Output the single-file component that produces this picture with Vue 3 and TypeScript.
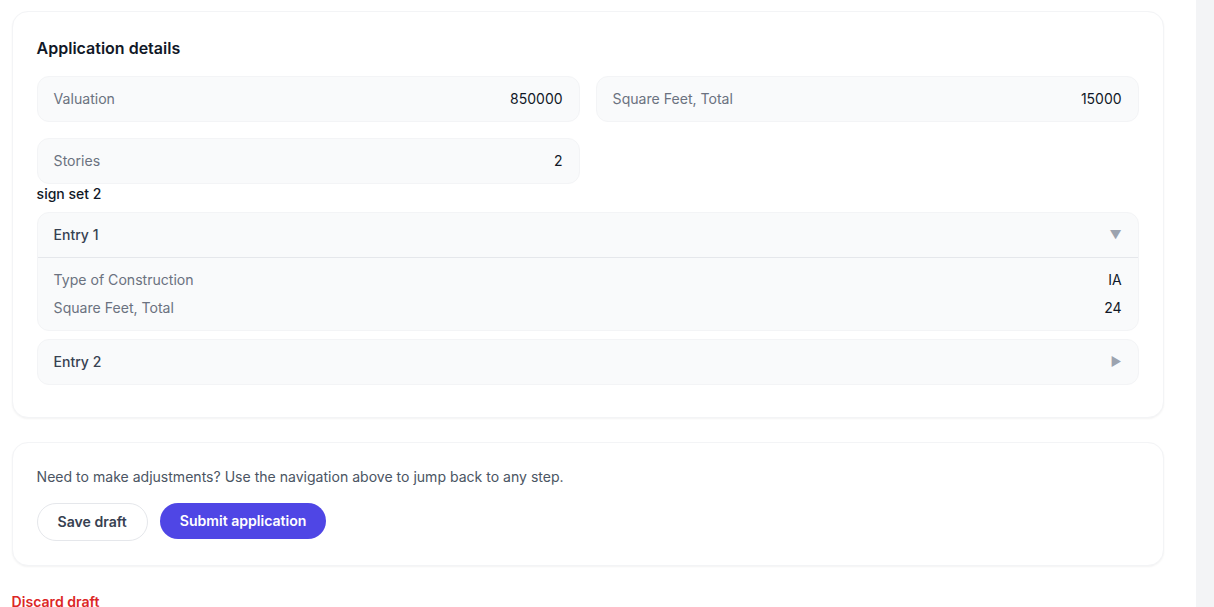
<script setup lang="ts">
const fields = [
  { label: 'Valuation', value: '850000' },
  { label: 'Square Feet, Total', value: '15000' },
  { label: 'Stories', value: '2' },
]
const rows = [
  { label: 'Type of Construction', value: 'IA' },
  { label: 'Square Feet, Total', value: '24' },
]
</script>

<template>
  <div class="page">
    <main class="main">
      <section class="card details">
        <h2 class="title">Application details</h2>
        <div class="grid">
          <div v-for="f in fields" :key="f.label" class="field">
            <span class="label">{{ f.label }}</span>
            <span class="value">{{ f.value }}</span>
          </div>
        </div>
        <div class="set-name">sign set 2</div>
        <div class="entries">
          <div class="entry">
            <div class="entry-head open">
              <span class="entry-name">Entry 1</span>
              <span class="caret">▼</span>
            </div>
            <div class="entry-body">
              <div v-for="r in rows" :key="r.label" class="row">
                <span class="label">{{ r.label }}</span>
                <span class="value">{{ r.value }}</span>
              </div>
            </div>
          </div>
          <div class="entry">
            <div class="entry-head">
              <span class="entry-name">Entry 2</span>
              <span class="caret">▶</span>
            </div>
          </div>
        </div>
      </section>

      <section class="card actions">
        <p class="hint">Need to make adjustments? Use the navigation above to jump back to any step.</p>
        <div class="buttons">
          <button class="btn secondary">Save draft</button>
          <button class="btn primary">Submit application</button>
        </div>
      </section>

      <button class="discard">Discard draft</button>
    </main>
    <aside class="rail"></aside>
  </div>
</template>

<style>
html, body { margin: 0; overflow: hidden; background: #fff; }
</style>

<style scoped>
.page {
  display: flex;
  width: 1214px;
  height: 607px;
  overflow: hidden;
  font-family: Inter, "Liberation Sans", sans-serif;
  font-size: 14px;
  line-height: 20px;
  color: #111827;
}
.main {
  width: 1196px;
  box-sizing: border-box;
  padding: 11.4px 32.4px 0 11.6px;
  flex: none;
}
.rail { flex: 1; background: #f3f4f6; }
.card {
  box-sizing: border-box;
  background: #fff;
  border: 1px solid #f3f4f6;
  border-radius: 16px;
  box-shadow: 0 1px 2px rgba(0, 0, 0, 0.05);
  padding: 24px;
}
.details { height: 406.6px; }
.title {
  margin: 0 0 16px;
  font-size: 16px;
  line-height: 24px;
  font-weight: 600;
  color: #111827;
}
.grid {
  display: grid;
  grid-template-columns: 1fr 1fr;
  gap: 16px;
}
.field {
  display: flex;
  justify-content: space-between;
  align-items: center;
  height: 46px;
  box-sizing: border-box;
  padding: 12px 16px;
  background: #f9fafb;
  border: 1px solid #f3f4f6;
  border-radius: 12px;
}
.label { color: #6b7280; font-size: 14.08px; }
.value { color: #111827; }
.set-name {
  height: 28px;
  line-height: 20px;
  font-weight: 500;
  color: #111827;
}
.entries { display: flex; flex-direction: column; gap: 8px; }
.entry {
  background: #f9fafb;
  border: 1px solid #f3f4f6;
  border-radius: 12px;
}
.entry-head {
  display: flex;
  justify-content: space-between;
  align-items: center;
  height: 44px;
  box-sizing: border-box;
  padding: 0 16px;
}
.entry-head.open { height: 45px; border-bottom: 1px solid #e5e7eb; }
.entry-name { font-weight: 500; color: #374151; }
.caret { color: #9ca3af; font-size: 12px; }
.entry-body {
  display: flex;
  flex-direction: column;
  gap: 8px;
  padding: 12px 16px;
}
.row { display: flex; justify-content: space-between; }
.actions { margin-top: 24px; height: 124px; }
.hint {
  margin: 0 0 16px;
  font-size: 14.06px;
  color: #4b5563;
  line-height: 20px;
}
.buttons { display: flex; gap: 12px; align-items: flex-start; }
.btn {
  font-family: inherit;
  font-size: 14.08px;
  line-height: 20px;
  font-weight: 600;
  border-radius: 999px;
  padding: 8px 20px;
  cursor: pointer;
}
.secondary { background: #fff; color: #374151; border: 1px solid #e5e7eb; height: 38px; }
.primary { background: #4f46e5; color: #fff; border: none; height: 36px; }
.discard {
  display: block;
  margin-top: 26px;
  padding: 0;
  background: none;
  border: none;
  font-family: inherit;
  font-size: 14.08px;
  line-height: 20px;
  font-weight: 600;
  color: #dc2626;
}
</style>
